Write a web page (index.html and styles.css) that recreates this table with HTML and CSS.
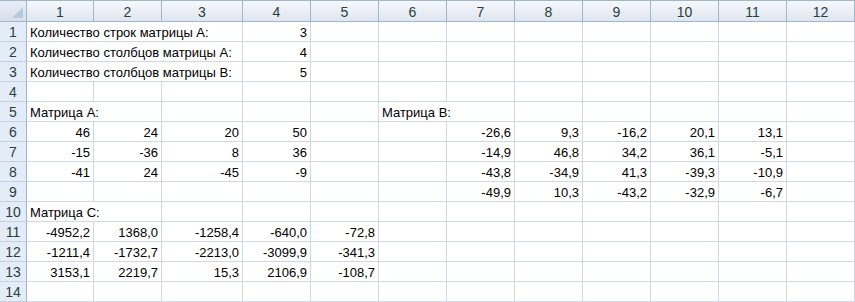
FILE: index.html
```html
<!DOCTYPE html>
<html lang="ru">
<head>
<meta charset="utf-8">
<title>Матрицы</title>
<link rel="stylesheet" href="styles.css">
</head>
<body>
<div class="sheet">
  <div class="corner"><span class="tri"></span></div>
  <div class="ch">1</div><div class="ch">2</div><div class="ch">3</div><div class="ch">4</div><div class="ch">5</div><div class="ch">6</div><div class="ch">7</div><div class="ch">8</div><div class="ch">9</div><div class="ch">10</div><div class="ch">11</div><div class="ch">12</div>

  <div class="rh">1</div>
  <div class="c l s3">Количество строк матрицы А:</div><div class="c n">3</div><div class="c"></div><div class="c"></div><div class="c"></div><div class="c"></div><div class="c"></div><div class="c"></div><div class="c"></div><div class="c"></div>

  <div class="rh">2</div>
  <div class="c l s3">Количество столбцов матрицы А:</div><div class="c n">4</div><div class="c"></div><div class="c"></div><div class="c"></div><div class="c"></div><div class="c"></div><div class="c"></div><div class="c"></div><div class="c"></div>

  <div class="rh">3</div>
  <div class="c l s3">Количество столбцов матрицы В:</div><div class="c n">5</div><div class="c"></div><div class="c"></div><div class="c"></div><div class="c"></div><div class="c"></div><div class="c"></div><div class="c"></div><div class="c"></div>

  <div class="rh">4</div>
  <div class="c"></div><div class="c"></div><div class="c"></div><div class="c"></div><div class="c"></div><div class="c"></div><div class="c"></div><div class="c"></div><div class="c"></div><div class="c"></div><div class="c"></div><div class="c"></div>

  <div class="rh">5</div>
  <div class="c l s2">Матрица А:</div><div class="c"></div><div class="c"></div><div class="c"></div><div class="c l s2">Матрица В:</div><div class="c"></div><div class="c"></div><div class="c"></div><div class="c"></div><div class="c"></div>

  <div class="rh">6</div>
  <div class="c n">46</div><div class="c n">24</div><div class="c n">20</div><div class="c n">50</div><div class="c"></div><div class="c"></div><div class="c n">-26,6</div><div class="c n">9,3</div><div class="c n">-16,2</div><div class="c n">20,1</div><div class="c n">13,1</div><div class="c"></div>

  <div class="rh">7</div>
  <div class="c n">-15</div><div class="c n">-36</div><div class="c n">8</div><div class="c n">36</div><div class="c"></div><div class="c"></div><div class="c n">-14,9</div><div class="c n">46,8</div><div class="c n">34,2</div><div class="c n">36,1</div><div class="c n">-5,1</div><div class="c"></div>

  <div class="rh">8</div>
  <div class="c n">-41</div><div class="c n">24</div><div class="c n">-45</div><div class="c n">-9</div><div class="c"></div><div class="c"></div><div class="c n">-43,8</div><div class="c n">-34,9</div><div class="c n">41,3</div><div class="c n">-39,3</div><div class="c n">-10,9</div><div class="c"></div>

  <div class="rh">9</div>
  <div class="c"></div><div class="c"></div><div class="c"></div><div class="c"></div><div class="c"></div><div class="c"></div><div class="c n">-49,9</div><div class="c n">10,3</div><div class="c n">-43,2</div><div class="c n">-32,9</div><div class="c n">-6,7</div><div class="c"></div>

  <div class="rh">10</div>
  <div class="c l s2">Матрица С:</div><div class="c"></div><div class="c"></div><div class="c"></div><div class="c"></div><div class="c"></div><div class="c"></div><div class="c"></div><div class="c"></div><div class="c"></div><div class="c"></div>

  <div class="rh">11</div>
  <div class="c n">-4952,2</div><div class="c n">1368,0</div><div class="c n">-1258,4</div><div class="c n">-640,0</div><div class="c n">-72,8</div><div class="c"></div><div class="c"></div><div class="c"></div><div class="c"></div><div class="c"></div><div class="c"></div><div class="c"></div>

  <div class="rh">12</div>
  <div class="c n">-1211,4</div><div class="c n">-1732,7</div><div class="c n">-2213,0</div><div class="c n">-3099,9</div><div class="c n">-341,3</div><div class="c"></div><div class="c"></div><div class="c"></div><div class="c"></div><div class="c"></div><div class="c"></div><div class="c"></div>

  <div class="rh">13</div>
  <div class="c n">3153,1</div><div class="c n">2219,7</div><div class="c n">15,3</div><div class="c n">2106,9</div><div class="c n">-108,7</div><div class="c"></div><div class="c"></div><div class="c"></div><div class="c"></div><div class="c"></div><div class="c"></div><div class="c"></div>

  <div class="rh">14</div>
  <div class="c"></div><div class="c"></div><div class="c"></div><div class="c"></div><div class="c"></div><div class="c"></div><div class="c"></div><div class="c"></div><div class="c"></div><div class="c"></div><div class="c"></div><div class="c"></div>
</div>
</body>
</html>
```
FILE: styles.css
```css
html, body {
  margin: 0;
  padding: 0;
  background: #ffffff;
}
.sheet {
  display: grid;
  grid-template-columns: 27px 67px 68px 81px repeat(9, 68px);
  grid-template-rows: 22px repeat(14, 20px);
  width: 855px;
  font-family: "Liberation Sans", Arial, sans-serif;
  font-size: 13px;
  color: #000;
}
.corner {
  position: relative;
  background: linear-gradient(#e9eef6, #d6dfeb);
  border-top: 1px solid #9eb6ce;
  border-right: 1px solid #9eb6ce;
  border-bottom: 1px solid #9eb6ce;
  box-sizing: border-box;
}
.tri {
  position: absolute;
  right: 3px;
  bottom: 3px;
  width: 0;
  height: 0;
  border-left: 11px solid transparent;
  border-bottom: 11px solid #b9c9dd;
}
.ch {
  box-sizing: border-box;
  background: linear-gradient(#f6f8fb, #dfe6ef);
  border-top: 1px solid #9eb6ce;
  border-right: 1px solid #9eb6ce;
  border-bottom: 1px solid #9eb6ce;
  color: #27413e;
  font-size: 14px;
  display: flex;
  align-items: center;
  justify-content: center;
  padding-top: 1px;
}
.rh {
  box-sizing: border-box;
  background: #e4ecf7;
  border-right: 1px solid #9eb6ce;
  border-bottom: 1px solid #c5d1e1;
  color: #27413e;
  font-size: 14px;
  display: flex;
  align-items: center;
  justify-content: center;
}
.c {
  box-sizing: border-box;
  border-right: 1px solid #d0d7e5;
  border-bottom: 1px solid #d0d7e5;
  display: flex;
  align-items: center;
  white-space: nowrap;
  padding: 1px 3px 0;
  overflow: visible;
}
.n {
  justify-content: flex-end;
}
.l {
  justify-content: flex-start;
}
.s2 {
  grid-column: span 2;
}
.s3 {
  grid-column: span 3;
}
```
